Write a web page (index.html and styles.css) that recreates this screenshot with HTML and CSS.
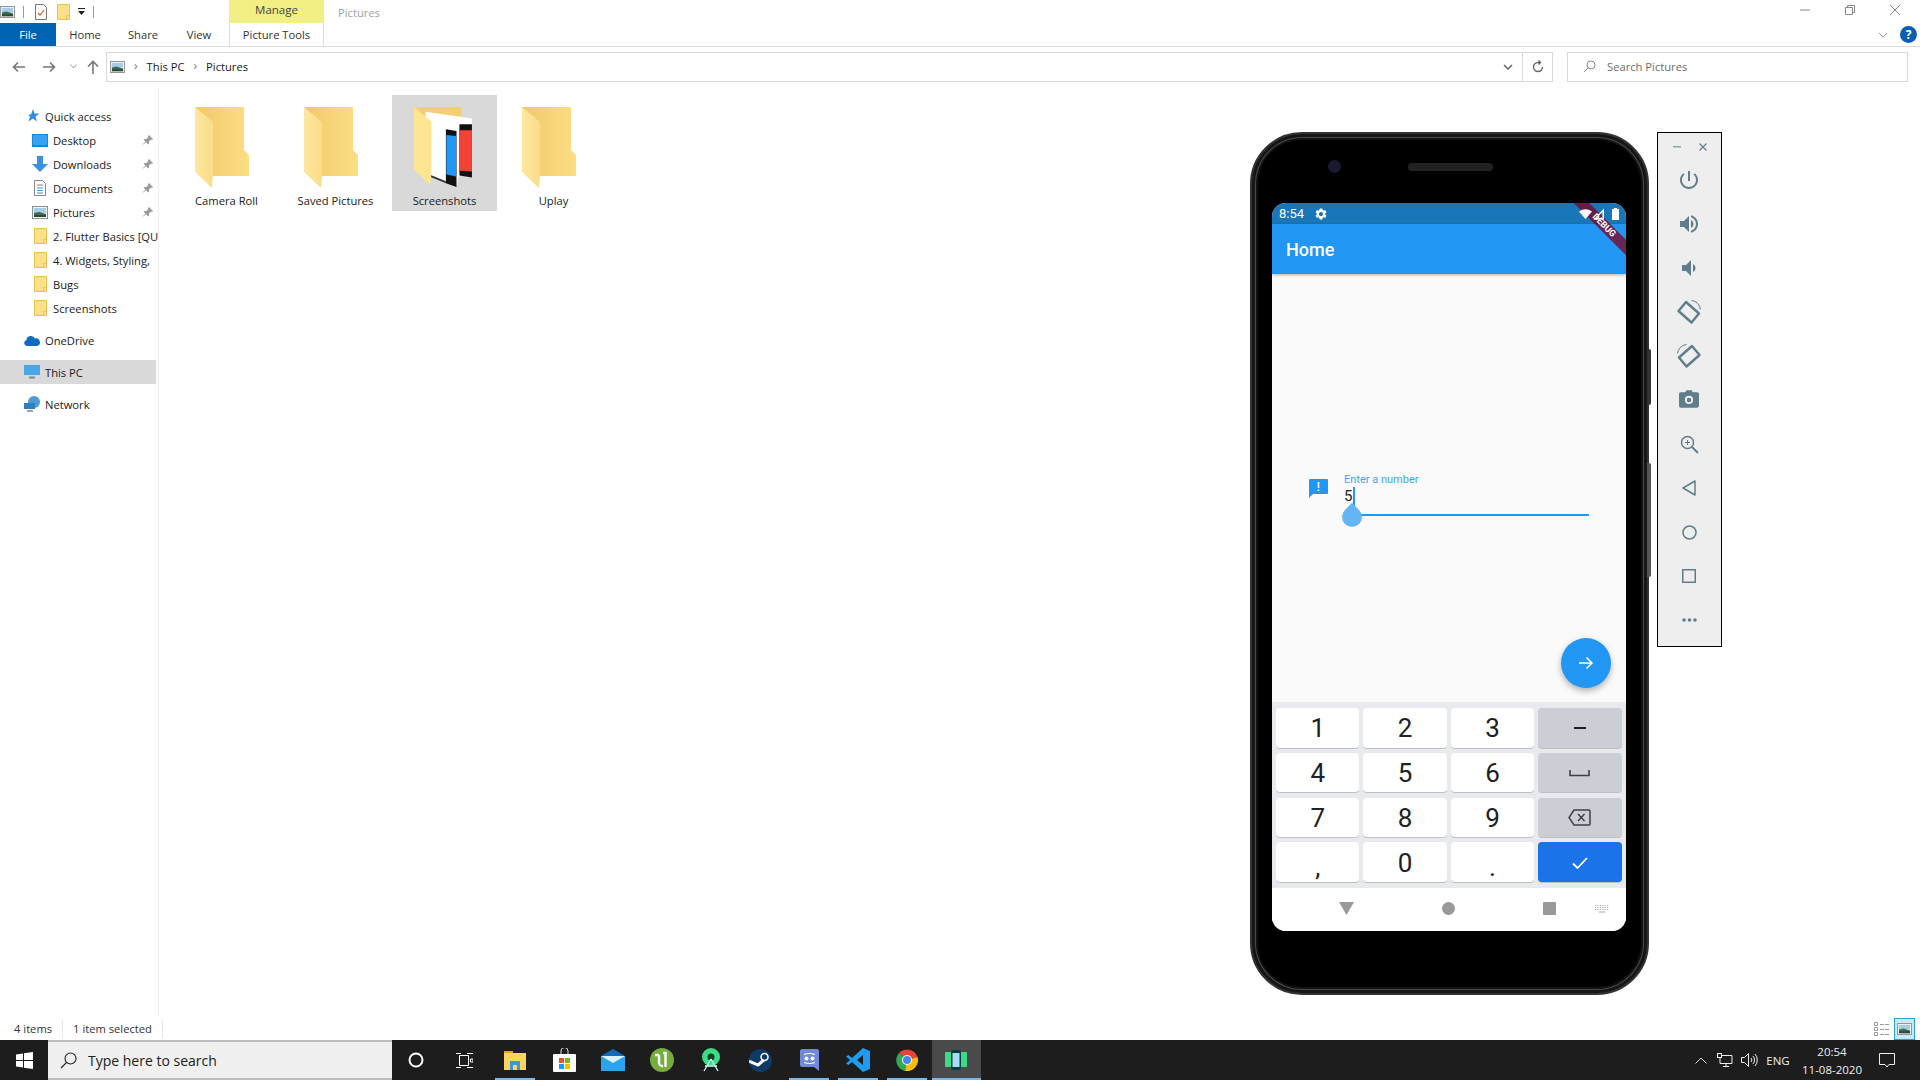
FILE: index.html
```html
<!DOCTYPE html>
<html lang="en">

<head>
    <meta charset="UTF-8">
    <title>Pictures</title>
    <link rel="stylesheet" href="styles.css">
</head>

<body>
    <svg class="defs" width="0" height="0">
        <symbol id="pic" viewBox="0 0 16 13">
            <rect x="0.5" y="0.5" width="15" height="12" fill="#f4f4f4" stroke="#8a8f94" />
            <rect x="2" y="2" width="12" height="5" fill="#a8cbe6" />
            <path d="M2 7l5-1 7 2v3H2z" fill="#3d6b50" />
            <rect x="2" y="9" width="12" height="2" fill="#2b4a3a" />
        </symbol>
        <symbol id="smallfolder" viewBox="0 0 13 16">
            <path d="M.5.5h12v15H.5z" fill="#fde08c" stroke="#eac14a" />
            <path d="M9.5 15.5v-4h3" fill="none" stroke="#eac14a" />
        </symbol>
        <symbol id="pin" viewBox="0 0 10 10">
            <path d="M6 0l4 4-1 1-1-.4L6 6.6V8.5L5 9.5 3 7 .6 9.6 0 9l2.5-2.6L.6 4.6 1.5 4h2L5.4 2 5 1z" fill="#9a9a9a" />
        </symbol>
        <symbol id="folder" viewBox="0 0 60 81">
            <defs>
                <linearGradient id="backfill" x1="0" x2="1" y1="0" y2="0">
                    <stop offset="0" stop-color="#f0c968" />
                    <stop offset="1" stop-color="#fdde85" />
                </linearGradient>
                <linearGradient id="flapfill" x1="0" x2="1" y1="0" y2="0">
                    <stop offset="0" stop-color="#fee79f" />
                    <stop offset="1" stop-color="#fadc88" />
                </linearGradient>
            </defs>
            <path d="M0 0h49v43l5 5v21H17L0 0z" fill="url(#backfill)" />
            <path d="M0 0l18 15v53l-1 13L0 65z" fill="url(#flapfill)" />
        </symbol>
    </svg>

    <header class="ribbon">
        <div class="qat">
            <div class="qat-left">
                <svg class="qat-app" width="15" height="12"><use href="#pic" /></svg>
                <span class="qat-sep"></span>
                <svg class="qat-doc" width="12" height="16" viewBox="0 0 12 16">
                    <path d="M.5.5h8l3 3v12H.5z" fill="#fff" stroke="#777" />
                    <path d="M3 9l2 2 4-5" fill="none" stroke="#e0592a" stroke-width="1.2" />
                </svg>
                <svg class="qat-folder" width="13" height="16"><use href="#smallfolder" /></svg>
                <svg class="qat-drop" width="7" height="7" viewBox="0 0 7 7">
                    <path d="M0 0h7v1H0zM0 3h7L3.5 7z" fill="#222" />
                </svg>
                <span class="qat-sep"></span>
            </div>
            <div class="manage">Manage</div>
            <div class="wintitle">Pictures</div>
            <div class="winctl">
                <svg width="12" height="12" viewBox="0 0 12 12"><path d="M1 6h10" stroke="#888" /></svg>
                <svg width="12" height="12" viewBox="0 0 12 12"><path d="M1.5 3.5h7v7h-7zM3.5 3.5v-2h7v7h-2" fill="none" stroke="#888" /></svg>
                <svg width="12" height="12" viewBox="0 0 12 12"><path d="M1 1l10 10M11 1L1 11" stroke="#888" /></svg>
            </div>
        </div>
        <div class="tabs">
            <div class="tab tab-file">File</div>
            <div class="tab">Home</div>
            <div class="tab">Share</div>
            <div class="tab tab-view">View</div>
            <div class="tab tab-tools">Picture Tools</div>
            <div class="tabs-right">
                <svg width="10" height="6" viewBox="0 0 10 6"><path d="M1 1l4 4 4-4" fill="none" stroke="#999" /></svg>
                <span class="help">?</span>
            </div>
        </div>
    </header>

    <nav class="addrrow">
        <div class="navbtns">
            <svg width="14" height="12" viewBox="0 0 14 12"><path d="M13 6H2M6 1.500L1.500 6 6 10.500" fill="none" stroke="#777" stroke-width="1.600" /></svg>
            <svg width="14" height="12" viewBox="0 0 14 12"><path d="M1 6h11M8 1.500L12.500 6 8 10.500" fill="none" stroke="#777" stroke-width="1.600" /></svg>
            <svg width="7" height="5" viewBox="0 0 7 5"><path d="M.5.500L3.500 4 6.500.500" fill="none" stroke="#999" /></svg>
            <svg width="12" height="14" viewBox="0 0 12 14"><path d="M6 14V2M1 6.500L6 1.500 11 6.500" fill="none" stroke="#777" stroke-width="1.600" /></svg>
        </div>
        <div class="addrbox">
            <svg width="15" height="12"><use href="#pic" /></svg>
            <span class="crumbsep">&rsaquo;</span>
            <span class="crumb">This PC</span>
            <span class="crumbsep">&rsaquo;</span>
            <span class="crumb">Pictures</span>
            <span class="addr-chev">
                <svg width="10" height="6" viewBox="0 0 10 6"><path d="M1 1l4 4 4-4" fill="none" stroke="#666" stroke-width="1.500" /></svg>
            </span>
            <span class="addr-refresh">
                <svg width="12" height="13" viewBox="0 0 12 13"><path d="M10.500 7a4.500 4.500 0 1 1-4.500-4.500h2M6.500.500L8.500 2.500 6.500 4.500" fill="none" stroke="#666" stroke-width="1.400" /></svg>
            </span>
        </div>
        <div class="searchbox">
            <svg width="13" height="13" viewBox="0 0 13 13"><circle cx="8" cy="5" r="4" fill="none" stroke="#888" /><path d="M5 8l-4 4" stroke="#888" /></svg>
            <span>Search Pictures</span>
        </div>
    </nav>

    <main class="explorer">
        <aside class="sidebar">
            <div class="side-row lvl1">
                <svg class="side-ic" width="16" height="16" viewBox="0 0 16 16"><path d="M9 1l1.500 4.500H15.500l-4 3 1.500 5-4-3-4.500 3 1.500-5-2-2h3z" fill="#2a8fe0" /></svg>Quick access
            </div>
            <div class="side-row lvl2">
                <svg class="side-ic" width="16" height="13" viewBox="0 0 16 13"><rect width="16" height="13" fill="#1b86dc" /><rect x="1" y="1" width="14" height="10" fill="#35a3ef" /></svg>Desktop
                <svg class="pin" width="10" height="10"><use href="#pin" /></svg>
            </div>
            <div class="side-row lvl2">
                <svg class="side-ic" width="16" height="16" viewBox="0 0 16 16"><path d="M5 0h6v8h5l-8 8-8-8h5z" fill="#3b8fdc" /></svg>Downloads
                <svg class="pin" width="10" height="10"><use href="#pin" /></svg>
            </div>
            <div class="side-row lvl2">
                <svg class="side-ic" width="16" height="16" viewBox="0 0 16 16"><path d="M2.500.500h8l3 3v12h-11z" fill="#fff" stroke="#888" /><path d="M5 5h6M5 8h6M5 10.500h6M5 13h6" stroke="#4a90d0" /></svg>Documents
                <svg class="pin" width="10" height="10"><use href="#pin" /></svg>
            </div>
            <div class="side-row lvl2">
                <svg class="side-ic" width="16" height="13"><use href="#pic" /></svg>Pictures
                <svg class="pin" width="10" height="10"><use href="#pin" /></svg>
            </div>
            <div class="side-row lvl2">
                <svg class="side-ic" width="13" height="16"><use href="#smallfolder" /></svg>2. Flutter Basics [QU
            </div>
            <div class="side-row lvl2">
                <svg class="side-ic" width="13" height="16"><use href="#smallfolder" /></svg>4. Widgets, Styling,
            </div>
            <div class="side-row lvl2">
                <svg class="side-ic" width="13" height="16"><use href="#smallfolder" /></svg>Bugs
            </div>
            <div class="side-row lvl2">
                <svg class="side-ic" width="13" height="16"><use href="#smallfolder" /></svg>Screenshots
            </div>
            <div class="side-row lvl1 group">
                <svg class="side-ic" width="16" height="11" viewBox="0 0 16 11"><path d="M3 11a3 3 0 0 1-.5-5.900A4.500 4.500 0 0 1 11 3.500 3.800 3.800 0 0 1 13 11z" fill="#0f6cbd" /></svg>OneDrive
            </div>
            <div class="side-row lvl1 group selected">
                <svg class="side-ic" width="16" height="14" viewBox="0 0 16 14"><rect width="16" height="10" fill="#49a7e8" /><path d="M5 12.500h6" stroke="#6a8aa0" stroke-width="2" /></svg>This PC
            </div>
            <div class="side-row lvl1 group">
                <svg class="side-ic" width="16" height="16" viewBox="0 0 16 16"><circle cx="10" cy="6" r="6" fill="#4f9bd6" /><rect y="7" width="11" height="6" fill="#2f7fbf" /><path d="M3 15h6" stroke="#6a8aa0" stroke-width="1.500" /></svg>Network
            </div>
        </aside>

        <section class="files">
            <div class="item">
                <svg class="item-ic" width="60" height="81"><use href="#folder" /></svg>
                <span>Camera Roll</span>
            </div>
            <div class="item">
                <svg class="item-ic" width="60" height="81"><use href="#folder" /></svg>
                <span>Saved Pictures</span>
            </div>
            <div class="item item-on">
                <svg class="item-ic" width="60" height="84" viewBox="0 0 60 84">
                    <path d="M0 0h49v10H0z" fill="#f3cf72" />
                    <path d="M12 5l48 7v56l-14 4-2 10-32-12z" fill="#fff" />
                    <path d="M16 70l17 7v2l-17-7z" fill="#333" />
                    <path d="M33 23l11 2v58l-11-4z" fill="#111" />
                    <path d="M33.500 29l10 1v42l-10-2z" fill="#2196f3" />
                    <path d="M47 18h13v55l-13-2z" fill="#111" />
                    <path d="M47 24h13v43l-13-1z" fill="#f44336" />
                    <path d="M0 0l18 15v53l-1 13L0 65z" fill="#fde592" />
                </svg>
                <span>Screenshots</span>
            </div>
            <div class="item">
                <svg class="item-ic" width="60" height="81"><use href="#folder" /></svg>
                <span>Uplay</span>
            </div>
        </section>

        <!-- emulator floats over the explorer like a separate window -->
        <div class="phone">
            <span class="phone-cam"></span>
            <span class="phone-speaker"></span>
            <span class="phone-power"></span>
            <span class="phone-vol"></span>
            <div class="screen">
                <div class="debug"><span>DEBUG</span></div>
                <div class="android-status">
                    <span class="clock">8:54</span>
                    <svg width="14" height="14" viewBox="0 0 24 24"><path fill="#fff" d="M19.140 12.940c.04-.3.06-.61.06-.94 0-.32-.02-.64-.07-.94l2.030-1.580c.18-.14.23-.41.12-.61l-1.920-3.320c-.12-.22-.37-.29-.59-.22l-2.390.96c-.5-.38-1.030-.7-1.620-.94l-.36-2.540c-.04-.24-.24-.41-.48-.41h-3.840c-.24 0-.43.17-.47.41l-.36 2.540c-.59.24-1.130.57-1.620.94l-2.390-.96c-.22-.08-.47 0-.59.22L2.740 8.870c-.12.21-.08.47.12.61l2.030 1.580c-.05.3-.09.63-.09.94s.02.64.07.94l-2.030 1.580c-.18.14-.23.41-.12.61l1.920 3.320c.12.22.37.29.59.22l2.390-.96c.5.38 1.030.7 1.620.94l.36 2.540c.05.24.24.41.48.41h3.840c.24 0 .44-.17.47-.41l.36-2.540c.59-.24 1.130-.56 1.620-.94l2.390.96c.22.08.47 0 .59-.22l1.920-3.320c.12-.22.07-.47-.12-.61l-2.010-1.580zM12 15.600c-1.980 0-3.600-1.620-3.600-3.600s1.620-3.600 3.600-3.600 3.600 1.620 3.600 3.600-1.620 3.600-3.600 3.600z" /></svg>
                    <div class="status-right">
                        <svg width="13" height="10" viewBox="0 0 13 10"><path d="M0 2.500Q6.500-2 13 2.500L6.500 10z" fill="#fff" /></svg>
                        <svg class="sig" width="12" height="12" viewBox="0 0 12 12"><path d="M11 .5V11.500H.5zM9.500 4L3.500 10H9.500z" fill="#fff" fill-rule="evenodd" /></svg>
                        <svg class="batt" width="7" height="12" viewBox="0 0 7 12"><path d="M2 0h3v1h2v11H0V1h2z" fill="#fff" /></svg>
                    </div>
                </div>
                <div class="appbar">Home</div>
                <div class="app-body">
                    <div class="form">
                        <svg class="form-ic" width="19" height="19" viewBox="0 0 19 19"><path d="M1 0h17a1 1 0 0 1 1 1v13a1 1 0 0 1-1 1H4l-4 4V1a1 1 0 0 1 1-1z" fill="#2196f3" /><path d="M8.700 3h1.600v6H8.700zM8.700 10.500h1.600v1.600H8.700z" fill="#fff" /></svg>
                        <div class="field">
                            <div class="field-label">Enter a number</div>
                            <div class="field-value">5<span class="caret"></span></div>
                            <div class="field-line"><span class="handle"></span></div>
                        </div>
                    </div>
                    <div class="fab">
                        <svg width="16" height="16" viewBox="0 0 16 16"><path d="M1 8h13M8.500 2.500L14 8l-5.500 5.500" fill="none" stroke="#fff" stroke-width="1.500" /></svg>
                    </div>
                </div>
                <div class="keyboard">
                    <div class="key">1</div>
                    <div class="key">2</div>
                    <div class="key">3</div>
                    <div class="key key-side"><svg width="12" height="2" viewBox="0 0 12 2"><rect width="12" height="2" fill="#202124" /></svg></div>
                    <div class="key">4</div>
                    <div class="key">5</div>
                    <div class="key">6</div>
                    <div class="key key-side"><svg width="21" height="7" viewBox="0 0 21 7"><path d="M1 0v5.500h19V0" fill="none" stroke="#3c4043" stroke-width="1.600" /></svg></div>
                    <div class="key">7</div>
                    <div class="key">8</div>
                    <div class="key">9</div>
                    <div class="key key-side"><svg width="23" height="17" viewBox="0 0 23 17"><path d="M6 1h15a1 1 0 0 1 1 1v13a1 1 0 0 1-1 1H6L1 8.500z" fill="none" stroke="#3c4043" stroke-width="1.500" /><path d="M10 5l6.500 7M16.500 5L10 12" stroke="#3c4043" stroke-width="1.500" /></svg></div>
                    <div class="key key-punct">,</div>
                    <div class="key">0</div>
                    <div class="key key-punct">.</div>
                    <div class="key key-done"><svg width="16" height="12" viewBox="0 0 16 12"><path d="M1 6.500l4.500 4.500L15 1" fill="none" stroke="#fff" stroke-width="1.800" /></svg></div>
                </div>
                <div class="navbar">
                    <svg width="15" height="13" viewBox="0 0 15 13"><path d="M0 0h15L7.500 13z" fill="#999" /></svg>
                    <svg width="13" height="13" viewBox="0 0 13 13"><circle cx="6.500" cy="6.500" r="6.500" fill="#999" /></svg>
                    <svg width="13" height="13" viewBox="0 0 13 13"><rect width="13" height="13" rx="1" fill="#999" /></svg>
                    <svg width="14" height="8" viewBox="0 0 14 8"><path d="M0 .5h14M0 2.500h14M0 4.500h14" stroke="#aaa" stroke-dasharray="1.200 1.200" /><path d="M4 7h6" stroke="#aaa" /></svg>
                </div>
            </div>
        </div>

        <div class="emu-tools">
            <div class="emu-title">
                <svg width="8" height="2" viewBox="0 0 8 2"><rect width="8" height="1.500" fill="#90a4ae" /></svg>
                <svg width="8" height="8" viewBox="0 0 8 8"><path d="M.5.500l7 7M7.500.500l-7 7" stroke="#607d8b" stroke-width="1.200" /></svg>
            </div>
            <div class="emu-btn"><svg width="24" height="24" viewBox="0 0 24 24"><path d="M13 3h-2v10h2V3zm4.830 2.170l-1.420 1.420C17.990 7.860 19 9.810 19 12c0 3.870-3.130 7-7 7s-7-3.130-7-7c0-2.190 1.010-4.140 2.580-5.420L6.170 5.170C4.230 6.820 3 9.260 3 12c0 4.970 4.030 9 9 9s9-4.030 9-9c0-2.740-1.230-5.180-3.170-6.830z" /></svg></div>
            <div class="emu-btn"><svg width="24" height="24" viewBox="0 0 24 24"><path d="M3 9v6h4l5 5V4L7 9H3zm13.500 3c0-1.770-1.020-3.290-2.500-4.030v8.050c1.480-.73 2.500-2.250 2.500-4.020zM14 3.230v2.060c2.890.86 5 3.540 5 6.710s-2.110 5.850-5 6.710v2.060c4.010-.91 7-4.490 7-8.770s-2.990-7.860-7-8.770z" /></svg></div>
            <div class="emu-btn"><svg width="24" height="24" viewBox="0 0 24 24"><path d="M18.500 12c0-1.770-1.020-3.290-2.500-4.030v8.050c1.480-.73 2.500-2.250 2.500-4.020zM5 9v6h4l5 5V4L9 9H5z" /></svg></div>
            <div class="emu-btn"><svg width="26" height="26" viewBox="0 0 26 26"><path d="M10 3L23 14.500l-7.500 9L2.500 12z" fill="none" stroke="#607d8b" stroke-width="2.400" stroke-linejoin="round" /><path d="M15.500 1.500a10 10 0 0 1 9 9" fill="none" stroke="#607d8b" /></svg></div>
            <div class="emu-btn"><svg width="26" height="26" viewBox="0 0 26 26"><path d="M16 3L3 14.500l7.500 9L23.500 12z" fill="none" stroke="#607d8b" stroke-width="2.400" stroke-linejoin="round" /><path d="M10.500 1.500a10 10 0 0 0-9 9" fill="none" stroke="#607d8b" /></svg></div>
            <div class="emu-btn"><svg class="cam-ic" width="20" height="18" viewBox="0 0 22 19"><path fill-rule="evenodd" d="M7 2l1-2h6l1 2h5a2 2 0 0 1 2 2v13a2 2 0 0 1-2 2H2a2 2 0 0 1-2-2V4a2 2 0 0 1 2-2zM11 6a4.500 4.500 0 1 0 0 9 4.500 4.500 0 0 0 0-9zM11 8a2.500 2.500 0 1 1 0 5 2.500 2.500 0 0 1 0-5z" /></svg></div>
            <div class="emu-btn"><svg width="19" height="19" viewBox="0 0 19 19"><circle cx="7.500" cy="7.500" r="6" fill="none" stroke="#607d8b" stroke-width="1.500" /><path d="M12 12l6 6" stroke="#607d8b" stroke-width="2" /><path d="M7.500 5v5M5 7.500h5" stroke="#607d8b" /></svg></div>
            <div class="emu-btn"><svg width="14" height="16" viewBox="0 0 14 16"><path d="M13 1v14L1 8z" fill="none" stroke="#607d8b" stroke-width="1.500" stroke-linejoin="round" /></svg></div>
            <div class="emu-btn"><svg width="15" height="15" viewBox="0 0 15 15"><circle cx="7.500" cy="7.500" r="6.500" fill="none" stroke="#607d8b" stroke-width="1.500" /></svg></div>
            <div class="emu-btn"><svg width="14" height="14" viewBox="0 0 14 14"><rect x=".75" y=".75" width="12.500" height="12.500" fill="none" stroke="#607d8b" stroke-width="1.500" /></svg></div>
            <div class="emu-btn"><svg width="15" height="4" viewBox="0 0 15 4"><circle cx="2" cy="2" r="1.800" /><circle cx="7.500" cy="2" r="1.800" /><circle cx="13" cy="2" r="1.800" /></svg></div>
        </div>
    </main>

    <footer class="statusbar">
        <span class="stat">4 items</span>
        <span class="stat">1 item selected</span>
        <div class="viewbtns">
            <svg width="16" height="14" viewBox="0 0 16 14"><path d="M.5.500h3v3h-3zM.5 5.500h3v3h-3zM.5 10.500h3v3h-3z" fill="none" stroke="#999" /><path d="M6 2.500h4M11 2.500h4M6 7.500h4M11 7.500h4M6 12.500h4M11 12.500h4" stroke="#999" /></svg>
            <span class="view-on"><svg width="15" height="12"><use href="#pic" /></svg></span>
        </div>
    </footer>

    <div class="taskbar">
        <div class="start">
            <svg width="17" height="17" viewBox="0 0 17 17"><path d="M0 2.500l7-1V8H0zM8 1.300L17 0v8H8zM0 9h7v6.500l-7-1zM8 9h9v8l-9-1.300z" fill="#fff" /></svg>
        </div>
        <div class="tb-search">
            <svg width="17" height="17" viewBox="0 0 17 17"><circle cx="10.500" cy="6.500" r="5.500" fill="none" stroke="#222" stroke-width="1.100" /><path d="M6.500 10.500L1 16" stroke="#222" stroke-width="1.100" /></svg>
            <span>Type here to search</span>
        </div>
        <div class="tb-sys">
            <svg width="16" height="16" viewBox="0 0 16 16"><circle cx="8" cy="8" r="6.500" fill="none" stroke="#fff" stroke-width="2" /></svg>
        </div>
        <div class="tb-sys">
            <svg width="17" height="15" viewBox="0 0 17 15"><path d="M3.500 2.500h9v10h-9zM0 .5h5M0 14.500h5M11 .5h6M11 14.500h6M14.500 6h2.500v3h-2.500z" fill="none" stroke="#fff" /></svg>
        </div>
        <div class="tb-apps">
            <div class="tb-app running">
                <svg width="22" height="20" viewBox="0 0 22 20"><path d="M0 1h9v3H0z" fill="#e5a31c" /><path d="M0 3h22v17H0z" fill="#fcd462" /><path d="M6 11h10v9H6z" fill="#3a96dd" /><path d="M9 15h4v5H9z" fill="#fcd462" /></svg>
            </div>
            <div class="tb-app">
                <svg width="23" height="24" viewBox="0 0 23 24"><path d="M8 6V3a3.500 3.500 0 0 1 7 0v3" fill="none" stroke="#ddd" /><rect y="6" width="23" height="18" rx="1" fill="#fff" /><path d="M6 10h5v5H6z" fill="#f25022" /><path d="M12 10h5v5h-5z" fill="#7fba00" /><path d="M6 16h5v5H6z" fill="#00a4ef" /><path d="M12 16h5v5h-5z" fill="#ffb900" /></svg>
            </div>
            <div class="tb-app">
                <svg width="24" height="22" viewBox="0 0 24 22"><path d="M12 0l12 7v15H0V7z" fill="#0f6cbd" /><path d="M0 7h24v15H0z" fill="#2aa4ec" /><path d="M0 7l12 7 12-7-12 0z" fill="#d8f0ff" /></svg>
            </div>
            <div class="tb-app">
                <svg width="24" height="24" viewBox="0 0 24 24"><circle cx="12" cy="12" r="12" fill="#76ad3c" /><path d="M9 7v7a3.500 3.500 0 0 0 4 4M5 7h4M13 5h4M15.500 5v14" fill="none" stroke="#fff" stroke-width="2.400" /></svg>
            </div>
            <div class="tb-app">
                <svg width="20" height="24" viewBox="0 0 20 24"><circle cx="10" cy="9" r="9" fill="#3ddc84" /><circle cx="10" cy="9" r="3.500" fill="#173d2c" /><path d="M10 11L3 23M10 11l7 12M4 18h12" stroke="#cfe" stroke-width="1.300" fill="none" /></svg>
            </div>
            <div class="tb-app">
                <svg width="23" height="23" viewBox="0 0 23 23"><circle cx="11.500" cy="11.500" r="11.500" fill="#0f3a66" /><path d="M0 12l9 4 6-5" fill="none" stroke="#fff" stroke-width="3" /><circle cx="15.500" cy="8" r="3.500" fill="none" stroke="#fff" stroke-width="1.500" /></svg>
            </div>
            <div class="tb-app running">
                <svg width="19" height="22" viewBox="0 0 19 22"><path d="M2 0h15a2 2 0 0 1 2 2v20l-5-4H2a2 2 0 0 1-2-2V2a2 2 0 0 1 2-2z" fill="#7289da" /><circle cx="6.500" cy="9.500" r="2" fill="#fff" /><circle cx="12.500" cy="9.500" r="2" fill="#fff" /><path d="M4 5.500q5.500-2 11 0M4 13.500q5.500 2 11 0" fill="none" stroke="#fff" stroke-width="1.200" /></svg>
            </div>
            <div class="tb-app running">
                <svg width="24" height="24" viewBox="0 0 24 24"><path d="M17 0l7 3v18l-7 3L6 14l-3.500 3L0 15.500 4 12 0 8.500 2.500 7 6 10zM17 7l-6 5 6 5z" fill="#1f9cf0" fill-rule="evenodd" /></svg>
            </div>
            <div class="tb-app running">
                <svg width="22" height="22" viewBox="0 0 22 22"><path d="M11 11L3 4A11 11 0 0 1 21.500 8z" fill="#ea4335" /><path d="M11 11L3 4A11 11 0 0 0 9 22z" fill="#34a853" /><path d="M11 11l10.500-3A11 11 0 0 1 9 22z" fill="#fbbc05" /><circle cx="11" cy="11" r="5" fill="#fff" /><circle cx="11" cy="11" r="4" fill="#4285f4" /></svg>
            </div>
            <div class="tb-app running active">
                <svg width="22" height="20" viewBox="0 0 22 20"><rect y="2" width="22" height="15" rx="1" fill="#3ddc84" /><rect x="6" y="0" width="10" height="20" rx="2" fill="#0b3a44" /><rect x="7.500" y="3" width="7" height="14" fill="#a9ddf6" /></svg>
            </div>
        </div>
        <div class="tray">
            <div class="tray-ic"><svg width="12" height="7" viewBox="0 0 12 7"><path d="M.5 6.500L6 1l5.500 5.500" fill="none" stroke="#ddd" /></svg></div>
            <div class="tray-ic"><svg width="16" height="14" viewBox="0 0 16 14"><path d="M3 2.500h12v8H3zM9 10.500v3M6 13.500h6" fill="none" stroke="#eee" /><rect x=".5" y=".5" width="4" height="4" fill="#222" stroke="#eee" /></svg></div>
            <div class="tray-ic"><svg width="17" height="14" viewBox="0 0 17 14"><path d="M.5 4.500h3l4-4v13l-4-4h-3zM10 5a3 3 0 0 1 0 4M12 3a6 6 0 0 1 0 8M14 1a9 9 0 0 1 0 12" fill="none" stroke="#eee" /></svg></div>
            <div class="tray-lang">ENG</div>
            <div class="tray-clock"><span>20:54</span><span>11-08-2020</span></div>
            <div class="tray-note"><svg width="16" height="15" viewBox="0 0 16 15"><path d="M.5.500h15v11H10l-2 2.500-2-2.500H.5z" fill="none" stroke="#eee" /></svg></div>
        </div>
    </div>
</body>

</html>
```

FILE: styles.css
```css
* {
    box-sizing: border-box;
}

body {
    margin: 0;
    width: 1920px;
    height: 1080px;
    overflow: hidden;
    display: flex;
    flex-direction: column;
    background-color: #fff;
    font-family: "Open Sans", "Noto Sans", sans-serif;
    font-size: 11.2px;
    color: #1a1a1a;
}

svg {
    display: block;
    flex-shrink: 0;
}

.defs {
    position: absolute;
}

/* ribbon */
.ribbon {
    flex-shrink: 0;
}

.qat {
    height: 23px;
    display: flex;
    align-items: center;
}

.qat-left {
    width: 229px;
    display: flex;
    align-items: center;
}

.qat-sep {
    width: 1px;
    height: 12px;
    background-color: #999;
}

.qat-app {
    margin-right: 8px;
}

.qat-doc {
    margin-left: 11px;
}

.qat-folder {
    margin-left: 10px;
}

.qat-drop {
    margin-left: 8px;
    margin-right: 8px;
}

.manage {
    width: 95px;
    height: 23px;
    background-color: #f2f084;
    text-align: center;
    line-height: 20px;
    color: #444;
    font-size: 11.5px;
}

.wintitle {
    margin-left: 14px;
    color: #a0a0a0;
    padding-top: 2px;
}

.winctl {
    margin-left: auto;
    display: flex;
    gap: 33px;
    padding-right: 19px;
    margin-top: -3px;
}

.tabs {
    height: 24px;
    display: flex;
    border-bottom: 1px solid #dadbdc;
}

.tab {
    width: 58px;
    text-align: center;
    line-height: 23px;
    color: #333;
}

.tab-file {
    width: 56px;
    background-color: #0063b1;
    color: #fff;
}

.tab-view {
    width: 57px;
    padding-right: 3px;
}

.tab-tools {
    width: 95px;
    border-left: 1px solid #dadbdc;
    border-right: 1px solid #dadbdc;
}

.tabs-right {
    margin-left: auto;
    display: flex;
    align-items: center;
    gap: 12px;
    padding-right: 3px;
}

.help {
    width: 17px;
    height: 17px;
    border-radius: 50%;
    background-color: #0a5fb4;
    color: #fff;
    font-weight: bold;
    font-size: 12px;
    line-height: 17px;
    text-align: center;
}

/* address row */
.addrrow {
    height: 41px;
    flex-shrink: 0;
    display: flex;
    align-items: center;
    padding-bottom: 2px;
    padding-right: 12px;
}

.navbtns {
    width: 106px;
    display: flex;
    align-items: center;
    padding-left: 12px;
    gap: 16px;
}

.navbtns svg:nth-child(3) {
    margin-left: -2px;
    margin-right: -6px;
}

.addrbox {
    width: 1447px;
    height: 30px;
    border: 1px solid #d9d9d9;
    display: flex;
    align-items: center;
    padding-left: 3px;
}

.crumbsep {
    margin: 0 9px 2px 9px;
    color: #777;
    font-size: 12px;
}

.addr-chev {
    margin-left: auto;
    width: 28px;
    display: flex;
    justify-content: center;
}

.addr-refresh {
    width: 30px;
    height: 100%;
    border-left: 1px solid #d9d9d9;
    display: flex;
    align-items: center;
    justify-content: center;
}

.searchbox {
    width: 341px;
    height: 30px;
    margin-left: 14px;
    border: 1px solid #d9d9d9;
    display: flex;
    align-items: center;
    gap: 11px;
    padding-left: 15px;
    color: #6d6d6d;
}

/* navigation pane + files */
.explorer {
    flex: 1;
    display: flex;
    min-height: 0;
}

.sidebar {
    width: 159px;
    padding-top: 16px;
    border-right: 1px solid #f0f0f0;
    flex-shrink: 0;
}

.side-row {
    height: 24px;
    width: 156px;
    display: flex;
    align-items: center;
    white-space: nowrap;
    position: relative;
}

.lvl1 {
    padding-left: 24px;
}

.lvl2 {
    padding-left: 32px;
}

.side-ic {
    margin-right: 5px;
}

.lvl2 .side-ic[width="13"] {
    margin-left: 2px;
    margin-right: 6px;
}

.group {
    margin-top: 8px;
}

.selected {
    background-color: #d9d9d9;
}

.pin {
    position: absolute;
    left: 143px;
    top: 7px;
}

.files {
    display: flex;
    align-items: flex-start;
    gap: 4px;
    padding: 7px 0 0 15px;
}

.item {
    width: 105px;
    height: 116px;
    padding-top: 12px;
    display: flex;
    flex-direction: column;
    align-items: center;
    position: relative;
}

.item-ic {
    align-self: flex-start;
    margin-left: 21px;
    height: 81px;
}

.item span {
    margin-top: 5px;
}

.item-on {
    background-color: #d9d9d9;
}

/* phone */
.phone {
    position: absolute;
    left: 1250px;
    top: 132px;
    width: 399px;
    height: 863px;
    padding: 71px 23px 64px 22px;
    background-color: #000;
    border: 2px solid #333;
    border-radius: 52px;
    box-shadow: inset 0 0 0 3px #161616, inset 0 0 0 4px #4a4a4a, inset 0 0 0 6px #111;
    font-family: Roboto, sans-serif;
}

.phone .screen {
    margin: -2px;
}

.phone-cam {
    position: absolute;
    left: 76px;
    top: 26px;
    width: 13px;
    height: 13px;
    border-radius: 50%;
    background-color: #1a1a2e;
}

.phone-speaker {
    position: absolute;
    left: 156px;
    top: 29px;
    width: 85px;
    height: 8px;
    border-radius: 4px;
    background-color: #222;
}

.phone-power,
.phone-vol {
    position: absolute;
    left: 395px;
    width: 4px;
    background-color: #333;
    border-radius: 0 2px 2px 0;
}

.phone-power {
    top: 215px;
    height: 56px;
}

.phone-vol {
    top: 329px;
    height: 114px;
    background-color: #555;
}

.screen {
    position: relative;
    height: 728px;
    width: 354px;
    border-radius: 14px;
    overflow: hidden;
    display: flex;
    flex-direction: column;
    background-color: #fafafa;
}

.debug {
    position: absolute;
    left: 252px;
    top: 17px;
    width: 160px;
    height: 11px;
    transform: rotate(45deg);
    background-color: rgba(127, 0, 32, 0.75);
    color: #fff;
    font-size: 9px;
    font-weight: bold;
    line-height: 11px;
    text-align: center;
    z-index: 2;
}

.android-status {
    height: 21px;
    background-color: #1976b8;
    display: flex;
    align-items: center;
    gap: 10px;
    padding: 0 7px;
    color: #fff;
    flex-shrink: 0;
}

.clock {
    font-size: 13px;
}

.status-right {
    margin-left: auto;
    display: flex;
    align-items: center;
    gap: 1px;
    position: relative;
    z-index: 3;
}

.batt {
    margin-left: 6px;
}

.appbar {
    height: 50px;
    flex-shrink: 0;
    background-color: #2196f3;
    color: #fff;
    font-size: 18px;
    font-weight: 500;
    line-height: 52px;
    padding-left: 14px;
    box-shadow: 0 1px 3px rgba(0, 0, 0, 0.3);
    z-index: 1;
}

.app-body {
    flex: 1;
    position: relative;
    padding: 198px 37px 0 37px;
}

.form {
    display: flex;
    gap: 16px;
}

.form-ic {
    margin-top: 7px;
}

.field {
    flex: 1;
    padding-top: 1px;
}

.field-label {
    font-size: 11px;
    line-height: 14px;
    color: #42a5f5;
}

.field-value {
    font-size: 15px;
    line-height: 19px;
    color: #222;
    display: flex;
}

.caret {
    width: 2px;
    height: 19px;
    margin-left: 1px;
    background-color: #2196f3;
}

.field-line {
    position: relative;
    height: 2px;
    margin-top: 8px;
    background-color: #2196f3;
}

.handle {
    position: absolute;
    left: -2px;
    top: -7px;
    width: 20px;
    height: 20px;
    border-radius: 50% 0 50% 50%;
    transform: rotate(-45deg);
    background-color: #64b5f6;
}

.fab {
    position: absolute;
    right: 15px;
    bottom: 14px;
    width: 50px;
    height: 50px;
    border-radius: 50%;
    background-color: #2196f3;
    box-shadow: 0 3px 6px rgba(0, 0, 0, 0.3);
    display: flex;
    align-items: center;
    justify-content: center;
}

.keyboard {
    height: 186px;
    flex-shrink: 0;
    background-color: #e8eaed;
    display: grid;
    grid-template-columns: repeat(4, 83.4px);
    grid-auto-rows: 39.5px;
    column-gap: 4px;
    row-gap: 5.3px;
    padding: 6px 0 0 4px;
}

.key {
    background-color: #fff;
    border-radius: 4px;
    box-shadow: 0 1px 0 #bdc1c6;
    display: flex;
    align-items: center;
    justify-content: center;
    padding-top: 1px;
    font-size: 26px;
    color: #202124;
}

.key-side {
    background-color: #ccced5;
}

.key-punct {
    padding-top: 9px;
}

.key-done {
    background-color: #1a73e8;
}

.navbar {
    height: 43px;
    flex-shrink: 0;
    background-color: #fff;
    display: flex;
    align-items: center;
    padding: 0 0 2px 67px;
    gap: 88px;
}

.navbar svg:last-child {
    margin-left: -49px;
}

/* emulator side toolbar */
.emu-tools {
    position: absolute;
    left: 1657px;
    top: 132px;
    width: 65px;
    height: 515px;
    background-color: #eeeeee;
    border: 1px solid #000;
    padding-right: 1px;
    display: flex;
    flex-direction: column;
    align-items: center;
}

.emu-title {
    height: 25px;
    width: 100%;
    display: flex;
    align-items: center;
    justify-content: space-between;
    padding: 3px 13px 0 15px;
}

.emu-btn {
    height: 44px;
    flex-shrink: 0;
    display: flex;
    align-items: center;
    justify-content: center;
    fill: #607d8b;
}

.cam-ic {
    margin-top: -2px;
}

/* status bar */
.statusbar {
    height: 23px;
    flex-shrink: 0;
    display: flex;
    align-items: center;
    padding-left: 14px;
    color: #333;
}

.stat {
    padding-right: 10px;
    margin-right: 10px;
    border-right: 1px solid #e6e6e6;
    line-height: 18px;
}

.viewbtns {
    margin-left: auto;
    display: flex;
    align-items: center;
    gap: 4px;
    padding-right: 5px;
}

.view-on {
    width: 21px;
    height: 22px;
    background-color: #cce8ff;
    border: 1px solid #26a0da;
    display: flex;
    align-items: center;
    justify-content: center;
}

/* taskbar */
.taskbar {
    height: 40px;
    flex-shrink: 0;
    background-color: #1d1d1d;
    display: flex;
    align-items: stretch;
    color: #f0f0f0;
}

.start {
    width: 48px;
    display: flex;
    align-items: center;
    justify-content: center;
}

.tb-search {
    width: 344px;
    background-color: #f0f0f0;
    border: 2px solid #bdbdbd;
    border-right: 0;
    border-left: 0;
    display: flex;
    align-items: center;
    gap: 11px;
    padding-left: 12px;
    color: #222;
    font-size: 14px;
}

.tb-sys {
    width: 48px;
    display: flex;
    align-items: center;
    justify-content: center;
}

.tb-apps {
    display: flex;
    margin-left: 2.500px;
}

.tb-app {
    width: 49px;
    display: flex;
    align-items: center;
    justify-content: center;
    position: relative;
}

.running::after {
    content: "";
    position: absolute;
    left: 4px;
    right: 5px;
    bottom: 0;
    height: 2px;
    background-color: #76b9ed;
}

.active {
    background-color: #4a4a4a;
}

.active::after {
    left: 0;
    right: 0;
}

.tray {
    margin-left: auto;
    display: flex;
    align-items: center;
    padding-right: 15px;
}

.tray-ic {
    width: 24px;
    display: flex;
    justify-content: center;
}

.tray-lang {
    width: 34px;
    text-align: center;
    font-size: 11.5px;
}

.tray-clock {
    width: 74px;
    display: flex;
    flex-direction: column;
    align-items: center;
    gap: 3px;
    font-size: 11.5px;
    line-height: 15px;
}

.tray-note {
    width: 36px;
    display: flex;
    justify-content: center;
}
```
